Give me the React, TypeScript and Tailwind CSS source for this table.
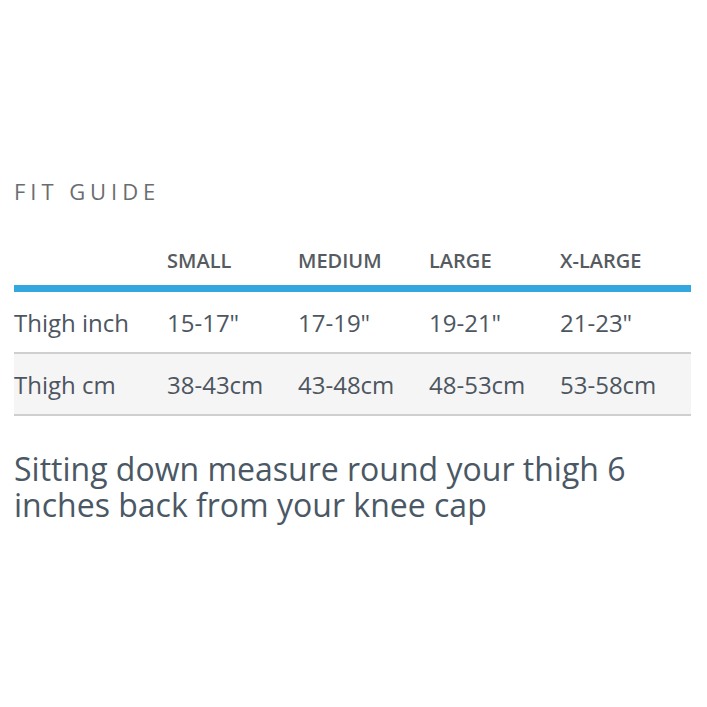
import React from 'react';

const sizes = ['SMALL', 'MEDIUM', 'LARGE', 'X-LARGE'];

const rows = [
  { label: 'Thigh inch', values: ['15-17"', '17-19"', '19-21"', '21-23"'], shaded: false },
  { label: 'Thigh cm', values: ['38-43cm', '43-48cm', '48-53cm', '53-58cm'], shaded: true },
];

const App = () => {
  return (
    <div className="w-[707px] h-[707px] bg-white px-[14px] pt-[176px] font-['Open_Sans',sans-serif]">
      <h2 className="text-[22px] leading-[30px] tracking-[0.225em] text-[#6a6d70] font-normal">
        FIT GUIDE
      </h2>

      <div className="w-[677px] mt-[41px]">
        <div className="grid grid-cols-[153px_131px_131px_131px_131px] pb-[11px]">
          <div />
          {sizes.map((s) => (
            <div key={s} className="text-[20px] leading-[27px] font-semibold text-[#555b61]">
              {s}
            </div>
          ))}
        </div>
        <div className="h-[7px] bg-[#35a7df]" />

        {rows.map((row) => (
          <div
            key={row.label}
            className={`grid grid-cols-[153px_131px_131px_131px_131px] items-center h-[62px] border-b-2 border-[#cfcfcf] ${
              row.shaded ? 'bg-[#f5f5f5]' : 'bg-white'
            }`}
          >
            <div className="text-[24px] pt-[2px] text-[#4d5660]">{row.label}</div>
            {row.values.map((v) => (
              <div key={v} className="text-[24px] pt-[2px] text-[#4d5660]">
                {v}
              </div>
            ))}
          </div>
        ))}
      </div>

      <p className="mt-[35px] text-[32px] leading-[36px] text-[#4a5865]">
        Sitting down measure round your thigh 6 inches back from your knee cap
      </p>
    </div>
  );
};

export default App;
